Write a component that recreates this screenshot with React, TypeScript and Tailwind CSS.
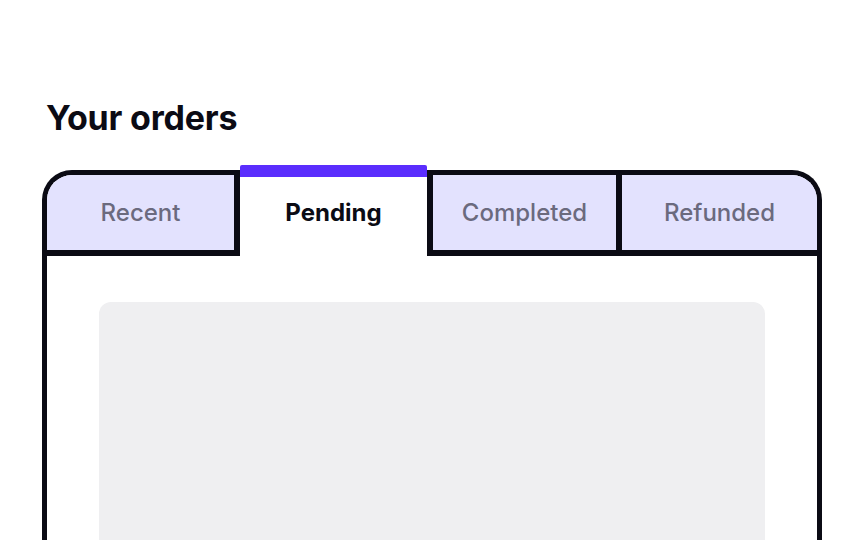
import React, { useState } from 'react';

export default function App() {
  const [active, setActive] = useState('Pending');

  return (
    <div
      className="h-[540px] w-full overflow-hidden bg-white"
      style={{ fontFamily: 'Inter, "Noto Sans", sans-serif' }}
    >
      <div className="mx-auto w-[780px] pt-[98px]">
        <h1 className="ml-1 text-[34px] font-bold leading-[40px] tracking-[-0.2px] text-[#0b0b14]">Your orders</h1>

        {/* Tabs card */}
        <div className="mt-[32px] h-[400px] rounded-t-[30px] border-[5px] border-b-0 border-[#0b0b14] bg-white">
          <div className="flex h-[81px]">
            <button
              onClick={() => setActive('Recent')}
              className="flex w-[193px] items-center justify-center rounded-tl-[25px] border-b-[6px] border-r-[6px] border-[#0b0b14] bg-[#e3e2fe] text-[24px] font-medium text-[#6b6a7e]"
            >
              Recent
            </button>
            <button
              onClick={() => setActive('Pending')}
              className="relative flex w-[187px] items-center justify-center bg-white pb-[6px] text-[24px] font-bold text-[#0b0b14]"
            >
              <span className="absolute -top-[10px] left-0 right-0 h-[12px] rounded-t-[2px] bg-[#5a2dfd]" />
              Pending
            </button>
            <button
              onClick={() => setActive('Completed')}
              className="flex w-[195px] items-center justify-center border-x-[6px] border-b-[6px] border-[#0b0b14] bg-[#e3e2fe] text-[24px] font-medium text-[#6b6a7e]"
            >
              Completed
            </button>
            <button
              onClick={() => setActive('Refunded')}
              className="flex w-[195px] items-center justify-center rounded-tr-[25px] border-b-[6px] border-[#0b0b14] bg-[#e3e2fe] text-[24px] font-medium text-[#6b6a7e]"
            >
              Refunded
            </button>
          </div>

          <div className="px-[52px] pt-[46px]">
            <div className="h-[300px] rounded-[12px] bg-[#efeff1]" />
          </div>
        </div>
      </div>
    </div>
  );
}
